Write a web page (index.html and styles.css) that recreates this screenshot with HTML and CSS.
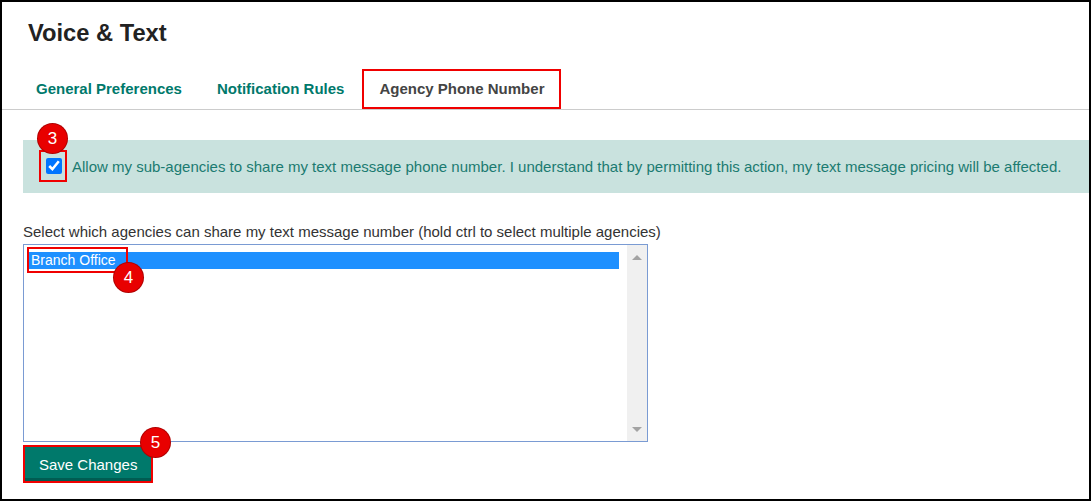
FILE: index.html
```html
<!DOCTYPE html>
<html lang="en">
<head>
  <meta charset="UTF-8">
  <title>Voice &amp; Text</title>
  <link rel="stylesheet" href="styles.css">
</head>
<body>
  <div class="frame">
    <h1 class="title">Voice &amp; Text</h1>
    <ul class="tabs">
      <li class="tab">General Preferences</li>
      <li class="tab">Notification Rules</li>
      <li class="tab active">Agency Phone Number</li>
    </ul>
    <div class="panel">
      <div class="alert">
        <span class="mark">
          <input type="checkbox" checked>
          <span class="badge badge-3">3</span>
        </span>
        <span class="alert-text">Allow my sub-agencies to share my text message phone number. I understand that by permitting this action, my text message pricing will be affected.</span>
      </div>
      <label class="field-label">Select which agencies can share my text message number (hold ctrl to select multiple agencies)</label>
      <div class="listbox">
        <div class="options">
          <div class="option selected">
            Branch Office
            <span class="option-mark"></span>
            <span class="badge badge-4">4</span>
          </div>
        </div>
        <div class="scrollbar">
          <span class="arrow up"></span>
          <span class="arrow down"></span>
        </div>
      </div>
      <div class="actions">
        <button class="save">Save Changes</button>
        <span class="badge badge-5">5</span>
      </div>
    </div>
  </div>
</body>
</html>
```

FILE: styles.css
```css
html, body {
  margin: 0;
  padding: 0;
  background: #fff;
}
body {
  font-family: 'Liberation Sans', Arial, sans-serif;
  color: #333;
}
.frame {
  width: 1091px;
  height: 501px;
  box-sizing: border-box;
  border: 2px solid #000;
  overflow: hidden;
  position: relative;
}
.title {
  margin: 17px 0 0 26px;
  font-size: 23.7px;
  line-height: 28px;
  font-weight: bold;
  color: #222;
}
.tabs {
  list-style: none;
  margin: 22px 0 0;
  padding: 0 0 0 17px;
  display: flex;
  border-bottom: 1px solid #ccc;
  height: 40px;
}
.tab {
  box-sizing: border-box;
  height: 40px;
  padding: 0 15px 0 15px;
  border: 2px solid transparent;
  font-size: 15px;
  line-height: 36px;
  font-weight: bold;
  color: #00796b;
}
.tab + .tab {
  margin-left: 1px;
}
.tab.active {
  border-color: #f00000;
  color: #444;
}
.panel {
  padding: 30px 0 0 21px;
}
.alert {
  display: flex;
  align-items: center;
  background: #c9e2de;
  padding: 10px 0 11px 16px;
  color: #1b7b71;
  font-size: 15px;
  white-space: nowrap;
}
.mark {
  position: relative;
  display: flex;
  border: 2px solid #f00000;
  padding: 6px 3px 6px 5px;
  margin-right: 5px;
}
.mark input {
  margin: 0;
  width: 16px;
  height: 16px;
  accent-color: #0075ff;
}
.field-label {
  display: block;
  margin-top: 30px;
  font-size: 15px;
  line-height: 17px;
  color: #333;
}
.listbox {
  margin-top: 4px;
  width: 625px;
  height: 198px;
  box-sizing: border-box;
  border: 1px solid #7a9bd3;
  display: flex;
}
.options {
  flex: 1;
  padding: 7px 8px 0 4px;
}
.option {
  position: relative;
  height: 17px;
  padding-left: 3px;
  font-size: 14px;
  line-height: 17px;
}
.option.selected {
  background: #1e90ff;
  color: #fff;
}
.option-mark {
  position: absolute;
  left: -1px;
  top: -5px;
  width: 97px;
  height: 22px;
  border: 2px solid #f00000;
}
.scrollbar {
  width: 20px;
  background: #f0f0f0;
  display: flex;
  flex-direction: column;
  justify-content: space-between;
  align-items: center;
  padding: 10px 0 9px;
}
.arrow {
  width: 0;
  height: 0;
  border-left: 5px solid transparent;
  border-right: 5px solid transparent;
}
.arrow.up {
  border-bottom: 5px solid #a3a3a3;
}
.arrow.down {
  border-top: 5px solid #a3a3a3;
}
.actions {
  margin-top: 3px;
  position: relative;
}
.save {
  box-sizing: border-box;
  height: 38px;
  padding: 0 14px;
  font-family: 'Liberation Sans', Arial, sans-serif;
  font-size: 15px;
  color: #fff;
  background: #00796b;
  border: 2px solid #f00000;
  box-shadow: inset 0 -3px 0 #005c52;
  cursor: pointer;
}
.badge {
  position: absolute;
  width: 29px;
  height: 29px;
  border-radius: 50%;
  background: #e80000;
  color: #fff;
  font-size: 17px;
  line-height: 29px;
  text-align: center;
  box-shadow: 0 0 0 1px #b00000;
}
.badge-3 {
  left: -3px;
  top: -28px;
}
.badge-4 {
  left: 86px;
  top: 11px;
}
.badge-5 {
  left: 118px;
  top: -17px;
}
```
